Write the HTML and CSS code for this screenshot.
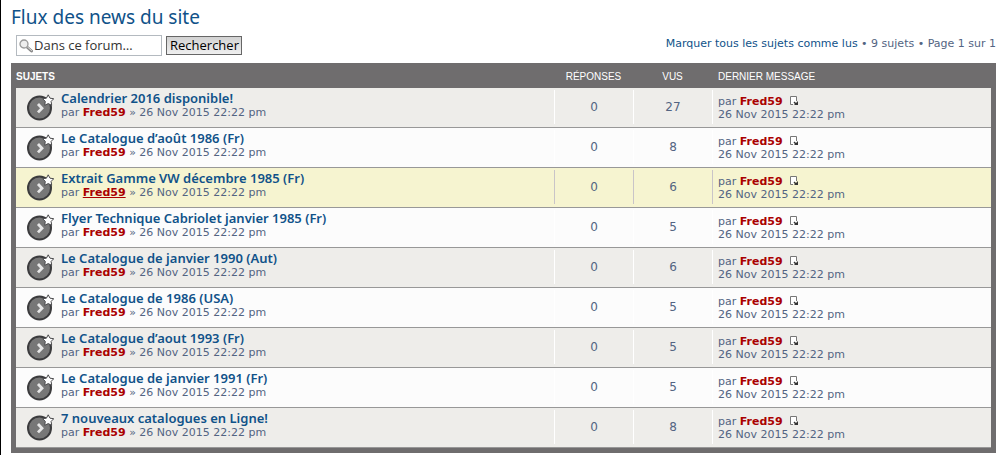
FILE: index.html
```html
<!DOCTYPE html>
<html lang="fr">
<head>
    <meta charset="UTF-8">
    <meta name="viewport" content="width=device-width, initial-scale=1.0">
    <title>Flux des news du site</title>
    <link rel="stylesheet" href="styles.css">
</head>
<body>
    <svg class="sprite" aria-hidden="true">
        <symbol id="icon-topic" viewBox="0 0 27 27">
            <circle cx="12.500" cy="14" r="11.500" fill="#777" stroke="#3b3b3d" stroke-width="2"/>
            <path d="M11 10l4 4.200-4 4.200" fill="none" stroke="#e6e6e6" stroke-width="2.800"/>
            <path d="M21.200.8l1.800 3.400 3.800.5-2.700 2.700.6 3.900-3.500-1.700-3.500 1.700.6-3.900-2.700-2.700 3.800-.5z" fill="#fff" stroke="#4b4b4d" stroke-width="1"/>
        </symbol>
        <symbol id="icon-last" viewBox="0 0 9 9">
            <path d="M4 8.500H1.500v-8h6V5" fill="#fff" stroke="#777"/>
            <path d="M9 5v4H5l1-1-1.500-1.500 1-1L7 7z" fill="#333"/>
        </symbol>
    </svg>

    <main class="page">
        <h1>Flux des news du site</h1>

        <div class="topic-actions">
            <form class="search" id="forumSearch">
                <label class="search-box" for="keywords">
                    <svg class="search-icon" viewBox="0 0 14 14" role="img" aria-label="Rechercher">
                        <path d="M8 8l4.500 4" stroke="#888" stroke-width="3" stroke-linecap="round"/>
                        <path d="M8.500 8l4 3.500" stroke="#ddd" stroke-width="1" stroke-linecap="round"/>
                        <circle cx="5" cy="5" r="4" fill="#eee" stroke="#999" stroke-width="1.300"/>
                    </svg>
                    <input type="text" id="keywords" name="keywords" value="Dans ce forum…">
                </label>
                <button type="submit">Rechercher</button>
            </form>
            <p class="pagination"><a href="#">Marquer tous les sujets comme lus</a> • 9 sujets • Page 1 sur 1</p>
        </div>

        <div class="forumbg">
            <table class="topics">
                <thead>
                    <tr>
                        <th class="subject" scope="col">Sujets</th>
                        <th class="count" scope="col">Réponses</th>
                        <th class="count" scope="col">Vus</th>
                        <th class="last" scope="col">Dernier message</th>
                    </tr>
                </thead>
                <tbody id="topicList"></tbody>
            </table>
        </div>
    </main>

    <script src="script.js"></script>
</body>
</html>
```

FILE: styles.css
```css
body {
    margin: 0;
    border-left: 1px solid #000;
    background: #fff;
    color: #536482;
    font-family: Verdana, "DejaVu Sans", sans-serif;
    font-size: 11px;
}
a {
    color: #105289;
    text-decoration: none;
}
.sprite {
    display: none;
}
.page {
    padding: 5px 6px 2px 10px;
}
h1 {
    margin: 0;
    color: #105289;
    font-family: "Trebuchet MS", "Noto Sans", sans-serif;
    font-size: 19px;
    font-weight: normal;
    line-height: 24px;
}

/* Search and pagination */
.topic-actions {
    display: flex;
    justify-content: space-between;
    align-items: flex-start;
    padding: 6px 0 7px 5px;
}
.search {
    display: flex;
    align-items: center;
    gap: 4px;
}
.search-box {
    display: flex;
    align-items: center;
    gap: 1px;
    box-sizing: border-box;
    width: 146px;
    height: 21px;
    padding: 0 2px;
    border: 1px solid #b4bac0;
    background: #fff;
}
.search-icon {
    flex: none;
    width: 14px;
    height: 14px;
    fill: none;
}
.search input {
    min-width: 0;
    width: 100%;
    height: 17px;
    padding: 0 0 1px;
    box-sizing: border-box;
    border: 0;
    outline: none;
    background: none;
    color: #333;
    font-family: "Open Sans", sans-serif;
    font-size: 13px;
}
.search button {
    height: 19px;
    padding: 0 2px 1px 3px;
    border: 1px solid #666;
    background: linear-gradient(#d2d2d2, #efefef);
    color: #000;
    font-family: "Open Sans", sans-serif;
    font-size: 13px;
    line-height: 16px;
}
.pagination {
    margin: 0;
    line-height: 18px;
}

/* Topic table */
.forumbg {
    padding: 0 5px 5px;
    background: #6f6d6e;
}
.topics {
    width: 100%;
    border-collapse: separate;
    border-spacing: 0;
    table-layout: fixed;
}
.topics th {
    height: 25px;
    padding: 2px 0 0;
    box-sizing: border-box;
    color: #fff;
    font-family: Arial, "Liberation Sans", sans-serif;
    font-size: 10px;
    font-weight: normal;
    line-height: 13px;
    text-transform: uppercase;
}
.topics .subject {
    text-align: left;
}
.topics th.subject {
    font-weight: bold;
}
.topics .count {
    width: 79px;
    text-align: center;
}
.topics .last {
    width: 279px;
    box-sizing: border-box;
    text-align: left;
}
.topics th.last {
    padding-left: 6px;
}
.topics td {
    height: 40px;
    box-sizing: border-box;
    padding: 2px 0 3px;
    border-bottom: 1px solid #989898;
    background: #fcfcfc;
    vertical-align: top;
}
.topics tr:nth-child(odd) td {
    background: #eeedea;
}
.topics tr.active td {
    background: #f6f4d0;
}
.topic {
    display: flex;
    align-items: center;
    gap: 7px;
    height: 34px;
    padding-left: 11px;
}
.topic-icon {
    flex: none;
    width: 27px;
    height: 27px;
}
.topic-title {
    display: block;
    font-family: "Trebuchet MS", "Noto Sans", sans-serif;
    font-size: 13px;
    font-weight: 600;
    line-height: 16px;
}
.topic p {
    margin: 0;
    line-height: 14px;
    padding-bottom: 4px;
}
.cell {
    box-sizing: border-box;
    height: 34px;
    border-left: 1px solid #fff;
}
.active .cell {
    border-color: #c9c4c8;
}
.count .cell {
    font-size: 12px;
    line-height: 34px;
}
.last .cell {
    padding: 5px 0 3px 5px;
    line-height: 13px;
}
.author {
    color: #a00;
    font-weight: bold;
}
.active .topic .author {
    text-decoration: underline;
}
.last-icon {
    width: 9px;
    height: 9px;
    margin-left: 3px;
    vertical-align: 0;
}
```

FILE: script.js
```javascript
const topics = [
    { title: "Calendrier 2016 disponible!", views: 27 },
    { title: "Le Catalogue d’août 1986 (Fr)", views: 8 },
    { title: "Extrait Gamme VW décembre 1985 (Fr)", views: 6, active: true },
    { title: "Flyer Technique Cabriolet janvier 1985 (Fr)", views: 5 },
    { title: "Le Catalogue de janvier 1990 (Aut)", views: 6 },
    { title: "Le Catalogue de 1986 (USA)", views: 5 },
    { title: "Le Catalogue d’aout 1993 (Fr)", views: 5 },
    { title: "Le Catalogue de janvier 1991 (Fr)", views: 5 },
    { title: "7 nouveaux catalogues en Ligne!", views: 8 }
];
const author = '<a class="author" href="#">Fred59</a>';
const date = "26 Nov 2015 22:22 pm";

document.getElementById("topicList").innerHTML = topics.map(topic => `
    <tr class="${topic.active ? "active" : ""}">
        <td class="subject">
            <div class="topic">
                <svg class="topic-icon" aria-hidden="true"><use href="#icon-topic"/></svg>
                <div>
                    <a class="topic-title" href="#">${topic.title}</a>
                    <p>par ${author} » ${date}</p>
                </div>
            </div>
        </td>
        <td class="count"><div class="cell">0</div></td>
        <td class="count"><div class="cell">${topic.views}</div></td>
        <td class="last">
            <div class="cell">
                par ${author}
                <a href="#" aria-label="Voir le dernier message"><svg class="last-icon"><use href="#icon-last"/></svg></a><br>
                ${date}
            </div>
        </td>
    </tr>`).join("");

document.getElementById("forumSearch").addEventListener("submit", event => {
    event.preventDefault();
});
```
